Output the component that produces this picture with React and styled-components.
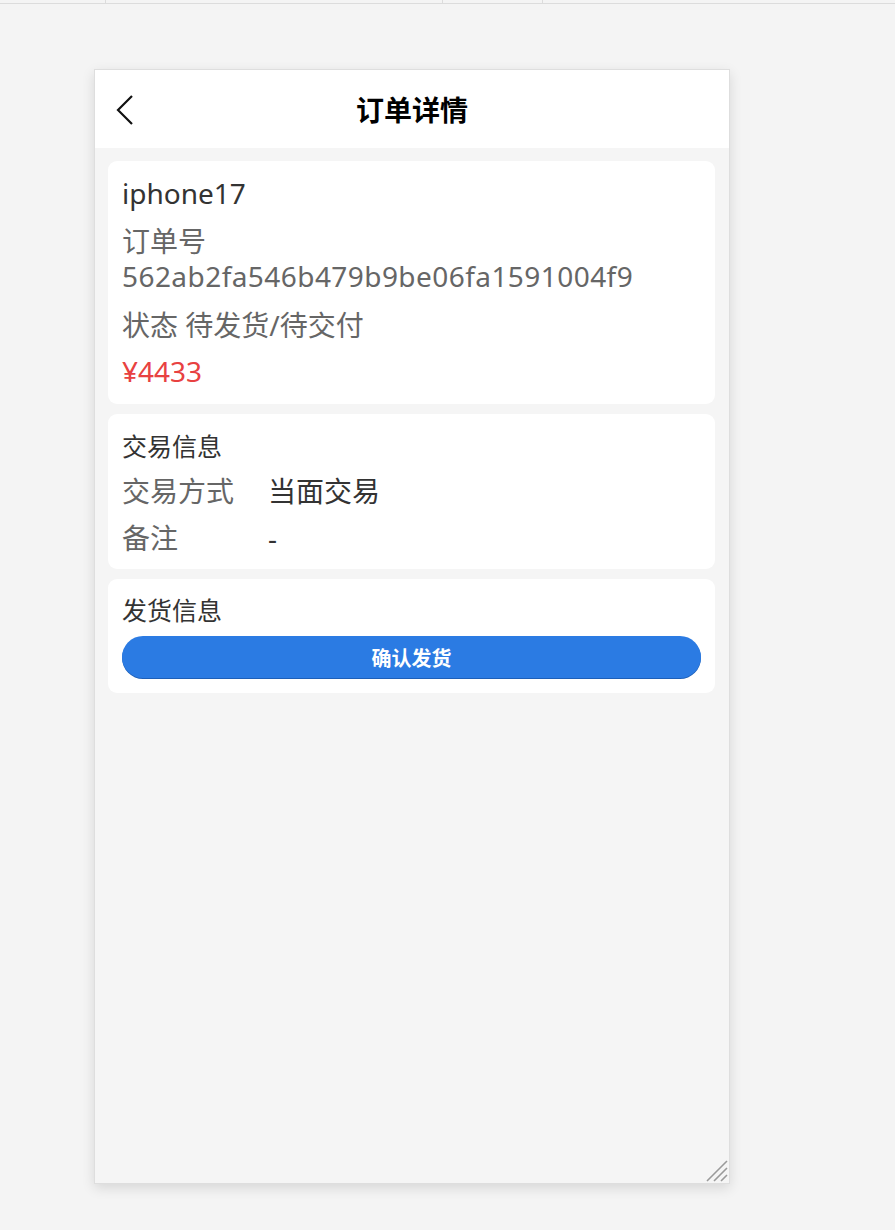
import React from "react";
import styled, { createGlobalStyle } from "styled-components";

const Global = createGlobalStyle`
  html, body { margin: 0; padding: 0; background: #f4f4f4; }
  body { font-family: "Noto Sans", "Noto Sans CJK SC", sans-serif; }
  * { box-sizing: border-box; }
`;

const Page = styled.div`
  min-height: 1230px;
  background: #f4f4f4;
`;

const TopStrip = styled.div`
  height: 4px;
  border-bottom: 1px solid #dcdcdc;
  display: flex;
`;

const StripCell = styled.div`
  width: ${(p) => p.$w}px;
  height: 100%;
  border-right: 1px solid #dcdcdc;
`;

const Stage = styled.div`
  padding: 65px 0 0 94px;
`;

const Phone = styled.div`
  position: relative;
  width: 636px;
  height: 1115px;
  background: #f5f5f5;
  border: 1px solid #dedede;
  box-shadow: 0 4px 12px rgba(0, 0, 0, 0.12);
  overflow: hidden;
  display: flex;
  flex-direction: column;
`;

const Grip = styled.svg`
  position: absolute;
  right: 1px;
  bottom: 1px;
  width: 22px;
  height: 22px;
`;

const Header = styled.header`
  height: 78px;
  background: #fff;
  position: relative;
  display: flex;
  align-items: center;
  justify-content: center;
  flex-shrink: 0;
`;

const Back = styled.button`
  position: absolute;
  left: 21px;
  top: 24px;
  width: 30px;
  height: 32px;
  padding: 0;
  border: 0;
  background: none;
  display: flex;
  align-items: center;
  justify-content: flex-start;
`;

const Title = styled.h1`
  margin: 0;
  font-size: 28px;
  font-weight: 700;
  color: #000;
  line-height: 1;
  padding-top: 2px;
`;

const Body = styled.main`
  padding: 13px 14px 13px 13px;
  display: flex;
  flex-direction: column;
  gap: 10px;
`;

const Card = styled.section`
  background: #fff;
  border-radius: 9px;
  padding: ${(p) => p.$pad || "14px"};
  display: flex;
  flex-direction: column;
`;

const Line = styled.div`
  font-size: 28px;
  line-height: 35px;
  color: ${(p) => p.$color || "#666"};
  margin-top: ${(p) => p.$mt || 0}px;
`;

const Code = styled.span`
  letter-spacing: 0.44px;
`;

const SectionTitle = styled.h2`
  margin: 0;
  font-size: 25px;
  font-weight: 400;
  line-height: 34px;
  color: #333;
`;

const Row = styled.div`
  display: flex;
  font-size: 28px;
  line-height: 35px;
  margin-top: ${(p) => p.$mt}px;
`;

const Label = styled.span`
  width: 146px;
  color: #666;
  flex-shrink: 0;
`;

const Value = styled.span`
  color: #333;
`;

const ConfirmButton = styled.button`
  margin-top: 9px;
  height: 42px;
  width: 100%;
  border: 0;
  border-radius: 21px;
  background: #2b7be3;
  box-shadow: 0 1px 0 #1d5fb8;
  color: #fff;
  font-family: "Noto Sans CJK SC", sans-serif;
  font-size: 20px;
  font-weight: 700;
  cursor: pointer;
`;

export default function App() {
  return (
    <Page>
      <Global />
      <TopStrip>
        <StripCell $w={106} />
        <StripCell $w={337} />
        <StripCell $w={100} />
      </TopStrip>
      <Stage>
        <Phone>
          <Header>
            <Back aria-label="返回">
              <svg width="20" height="32" viewBox="0 0 20 32" fill="none">
                <path d="M16 2 L2 16 L16 30" stroke="#111" strokeWidth="2.2" strokeLinecap="butt" strokeLinejoin="miter" />
              </svg>
            </Back>
            <Title>订单详情</Title>
          </Header>
          <Body>
            <Card $pad="15px 14px 15px">
              <Line $color="#333">iphone17</Line>
              <Line $mt={13}>订单号 <Code>562ab2fa546b479b9be06fa1591004f9</Code></Line>
              <Line $mt={14}>状态 待发货/待交付</Line>
              <Line $mt={11} $color="#e84141">¥4433</Line>
            </Card>
            <Card $pad="15px 14px 13px">
              <SectionTitle>交易信息</SectionTitle>
              <Row $mt={11}>
                <Label>交易方式</Label>
                <Value>当面交易</Value>
              </Row>
              <Row $mt={12}>
                <Label>备注</Label>
                <Value>-</Value>
              </Row>
            </Card>
            <Card $pad="14px 14px 15px">
              <SectionTitle>发货信息</SectionTitle>
              <ConfirmButton>确认发货</ConfirmButton>
            </Card>
          </Body>
          <Grip viewBox="0 0 22 22" aria-hidden="true">
            <path d="M1 21 L21 1 M8 21 L21 8 M15 21 L21 15" stroke="#9a9a9a" strokeWidth="1.6" />
          </Grip>
        </Phone>
      </Stage>
    </Page>
  );
}
